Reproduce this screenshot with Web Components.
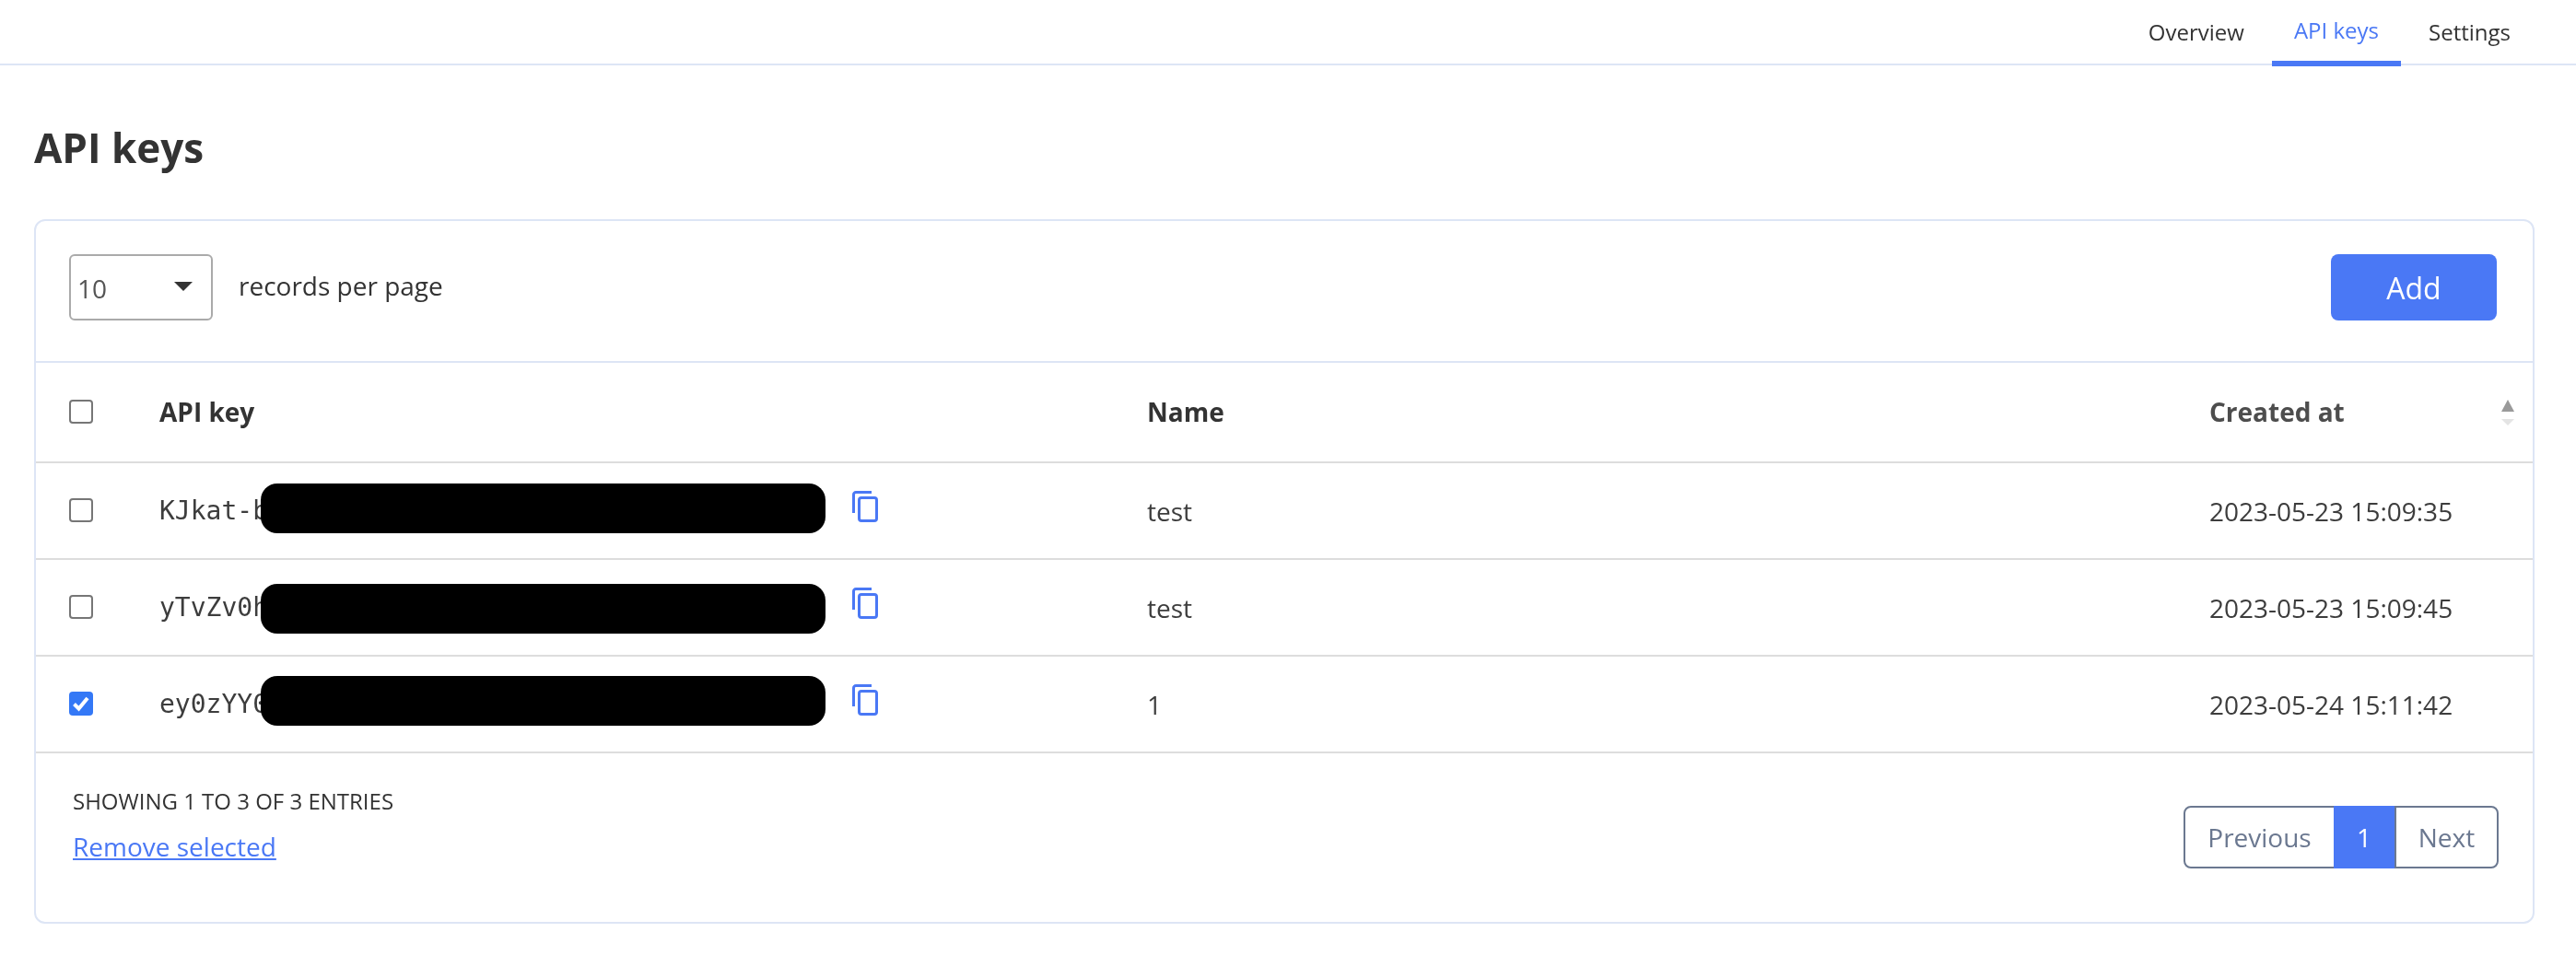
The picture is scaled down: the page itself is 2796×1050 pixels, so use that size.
<!DOCTYPE html>
<html>
<head>
<meta charset="utf-8">
<title>API keys</title>
<style>
  html { background: #fff; }
  /* own layer, so text gets grey antialiasing like the reference */
  body { margin: 0; font-family: "Open Sans", sans-serif; color: #333; will-change: opacity; }
</style>
</head>
<body>
<app-nav>
  <nav-tab>Overview</nav-tab>
  <nav-tab active>API keys</nav-tab>
  <nav-tab>Settings</nav-tab>
</app-nav>
<page-title>API keys</page-title>
<data-card>
  <card-toolbar>
    <page-select value="10"></page-select>
    <span slot="label">records per page</span>
    <add-button slot="action">Add</add-button>
  </card-toolbar>
  <key-head></key-head>
  <key-row api-key="KJkat-b" name="test" created="2023-05-23 15:09:35" mask-top="22"></key-row>
  <key-row api-key="yTvZv0h" name="test" created="2023-05-23 15:09:45" mask-top="26"></key-row>
  <key-row api-key="ey0zYY0" name="1" created="2023-05-24 15:11:42" checked mask-top="21"></key-row>
  <card-footer>
    <span slot="info">SHOWING 1 TO 3 OF 3 ENTRIES</span>
    <a slot="remove">Remove selected</a>
    <page-buttons slot="pager"></page-buttons>
  </card-footer>
</data-card>

<script>
class AppNav extends HTMLElement {
  constructor() {
    super();
    this.attachShadow({ mode: 'open' }).innerHTML = `
      <style>
        :host {
          display: flex;
          justify-content: flex-end;
          gap: 6px;
          height: 69px;
          padding-right: 47px;
          border-bottom: 2px solid #dde5f5;
        }
      </style>
      <slot></slot>
    `;
  }
}
customElements.define('app-nav', AppNav);

class NavTab extends HTMLElement {
  constructor() {
    super();
    this.attachShadow({ mode: 'open' }).innerHTML = `
      <style>
        :host {
          display: block;
          box-sizing: border-box;
          height: 72px;
          padding: 0 24px;
          font-size: 24px;
          line-height: 70px;
          color: #333;
          border-bottom: 6px solid transparent;
        }
        :host([active]) {
          color: #4a78f5;
          line-height: 66px;
          border-bottom-color: #4a78f5;
        }
      </style>
      <slot></slot>
    `;
  }
}
customElements.define('nav-tab', NavTab);

class PageTitle extends HTMLElement {
  constructor() {
    super();
    this.attachShadow({ mode: 'open' }).innerHTML = `
      <style>
        :host {
          display: block;
          padding: 65px 0 0 37px;
          height: 102px;
          font-size: 44px;
          line-height: 48px;
          font-weight: 700;
          color: #333;
        }
      </style>
      <slot></slot>
    `;
  }
}
customElements.define('page-title', PageTitle);

class DataCard extends HTMLElement {
  constructor() {
    super();
    this.attachShadow({ mode: 'open' }).innerHTML = `
      <style>
        :host {
          display: block;
          box-sizing: border-box;
          margin: 0 45px 0 37px;
          height: 765px;
          border: 2px solid #dde5f5;
          border-radius: 12px;
        }
      </style>
      <slot></slot>
    `;
  }
}
customElements.define('data-card', DataCard);

class CardToolbar extends HTMLElement {
  constructor() {
    super();
    this.attachShadow({ mode: 'open' }).innerHTML = `
      <style>
        :host {
          display: flex;
          align-items: center;
          padding: 36px 39px 44px 36px;
          font-size: 28px;
          color: #333;
        }
        .label { margin-left: 28px; position: relative; top: -2px; }
        .spacer { flex: 1; }
      </style>
      <slot></slot>
      <div class="label"><slot name="label"></slot></div>
      <div class="spacer"></div>
      <slot name="action"></slot>
    `;
  }
}
customElements.define('card-toolbar', CardToolbar);

class PageSelect extends HTMLElement {
  constructor() {
    super();
    this.attachShadow({ mode: 'open' }).innerHTML = `
      <style>
        :host {
          display: flex;
          align-items: center;
          justify-content: space-between;
          box-sizing: border-box;
          width: 156px;
          height: 72px;
          padding: 0 20px 0 7px;
          border: 2px solid #aaa;
          border-radius: 6px;
          font-size: 28px;
          color: #555;
        }
        svg { display: block; margin-top: -2px; }
        span { position: relative; top: 1px; }
      </style>
      <span>${this.getAttribute('value')}</span>
      <svg width="20" height="10" viewBox="0 0 20 10"><path d="M0 0H20L10 10Z" fill="#333"/></svg>
    `;
  }
}
customElements.define('page-select', PageSelect);

class AddButton extends HTMLElement {
  constructor() {
    super();
    this.attachShadow({ mode: 'open' }).innerHTML = `
      <style>
        :host {
          display: flex;
          align-items: center;
          justify-content: center;
          width: 180px;
          height: 72px;
          border-radius: 8px;
          background: #4a78f5;
          color: #fff;
          font-size: 32px;
        }
      </style>
      <slot></slot>
    `;
  }
}
customElements.define('add-button', AddButton);

class RowCheck extends HTMLElement {
  constructor() {
    super();
    const mark = this.hasAttribute('checked')
      ? '<svg width="26" height="26" viewBox="0 0 26 26"><path d="M5.500 13.500L10.500 18.500L20 7" fill="none" stroke="#fff" stroke-width="4"/></svg>'
      : '';
    this.attachShadow({ mode: 'open' }).innerHTML = `
      <style>
        :host {
          display: block;
          box-sizing: border-box;
          width: 26px;
          height: 26px;
          border: 2px solid #767676;
          border-radius: 4px;
          background: #fff;
        }
        :host([checked]) {
          border: 0;
          background: #3478f6;
        }
        svg { display: block; }
      </style>
      ${mark}
    `;
  }
}
customElements.define('row-check', RowCheck);

class KeyHead extends HTMLElement {
  constructor() {
    super();
    this.attachShadow({ mode: 'open' }).innerHTML = `
      <style>
        :host {
          display: grid;
          grid-template-columns: 134px 1072px 1153px 1fr;
          align-items: center;
          height: 107px;
          border-top: 2px solid #dde5f5;
          border-bottom: 2px solid #ddd;
          font-size: 28px;
          font-weight: 700;
          color: #333;
        }
        .title { padding-bottom: 2px; }
        .check { padding: 0 0 1px 36px; }
        .sort { display: flex; justify-content: space-between; padding-right: 20px; align-items: center; color: #4d4d4d; }
        svg { display: block; margin-top: 2px; }
      </style>
      <div class="check"><row-check></row-check></div>
      <div class="title">API key</div>
      <div class="title">Name</div>
      <div class="title sort">
        <span>Created at</span>
        <svg width="14" height="28" viewBox="0 0 14 28">
          <path d="M7 0L14 13H0Z" fill="#9a9a9a"/>
          <path d="M0 21H14L7 28Z" fill="#e4e4e4"/>
        </svg>
      </div>
    `;
  }
}
customElements.define('key-head', KeyHead);

class CopyIcon extends HTMLElement {
  constructor() {
    super();
    this.attachShadow({ mode: 'open' }).innerHTML = `
      <style>
        :host { display: block; width: 28px; height: 34px; }
        svg { display: block; }
      </style>
      <svg width="28" height="34" viewBox="0 0 28 34" fill="none" stroke="#4a78f5" stroke-width="3">
        <path d="M1.500 24V4A2.500 2.500 0 0 1 4 1.500H21"/>
        <rect x="7.500" y="7.500" width="19" height="25" rx="2.500"/>
      </svg>
    `;
  }
}
customElements.define('copy-icon', CopyIcon);

class KeyRow extends HTMLElement {
  constructor() {
    super();
    this.attachShadow({ mode: 'open' }).innerHTML = `
      <style>
        :host {
          display: grid;
          grid-template-columns: 134px 1072px 1153px 1fr;
          align-items: center;
          height: 103px;
          border-bottom: 2px solid #ddd;
          font-size: 28px;
          color: #3d3d3d;
        }
        .check { padding: 0 0 1px 36px; }
        .key {
          position: relative;
          font-family: "DejaVu Sans Mono", monospace;
          height: 100%;
          display: flex;
          align-items: center;
        }
        .mask {
          position: absolute;
          left: 110px;
          top: ${this.getAttribute('mask-top')}px;
          width: 613px;
          height: 54px;
          background: #000;
          border-radius: 18px;
        }
        copy-icon {
          position: absolute;
          left: 752px;
          top: 30px;
        }
      </style>
      <div class="check"><row-check ${this.hasAttribute('checked') ? 'checked' : ''}></row-check></div>
      <div class="key">
        <span>${this.getAttribute('api-key')}</span>
        <div class="mask"></div>
        <copy-icon></copy-icon>
      </div>
      <div>${this.getAttribute('name')}</div>
      <div>${this.getAttribute('created')}</div>
    `;
  }
}
customElements.define('key-row', KeyRow);

class CardFooter extends HTMLElement {
  constructor() {
    super();
    this.attachShadow({ mode: 'open' }).innerHTML = `
      <style>
        :host {
          display: flex;
          justify-content: space-between;
          padding: 0 37px 0 40px;
        }
        .info { font-size: 24px; line-height: 32px; margin-top: 36px; color: #333; }
        .remove { font-size: 28px; line-height: 38px; margin-top: 14px; }
        ::slotted(a) { color: #4a78f5; text-decoration: underline; }
        .right { margin-top: 57px; }
      </style>
      <div>
        <div class="info"><slot name="info"></slot></div>
        <div class="remove"><slot name="remove"></slot></div>
      </div>
      <div class="right"><slot name="pager"></slot></div>
    `;
  }
}
customElements.define('card-footer', CardFooter);

class PageButtons extends HTMLElement {
  constructor() {
    super();
    this.attachShadow({ mode: 'open' }).innerHTML = `
      <style>
        :host {
          display: flex;
          box-sizing: border-box;
          width: 342px;
          height: 68px;
          border: 2px solid #6b7890;
          border-radius: 8px;
          font-size: 28px;
          color: #6b7890;
          line-height: 64px;
          text-align: center;
        }
        .prev { width: 161px; }
        .cur {
          width: 66px;
          margin: -2px 0;
          height: 68px;
          line-height: 68px;
          background: #4a78f5;
          color: #fff;
        }
        .next { flex: 1; border-left: 2px solid #6b7890; }
      </style>
      <div class="prev">Previous</div>
      <div class="cur">1</div>
      <div class="next">Next</div>
    `;
  }
}
customElements.define('page-buttons', PageButtons);
</script>
</body>
</html>
